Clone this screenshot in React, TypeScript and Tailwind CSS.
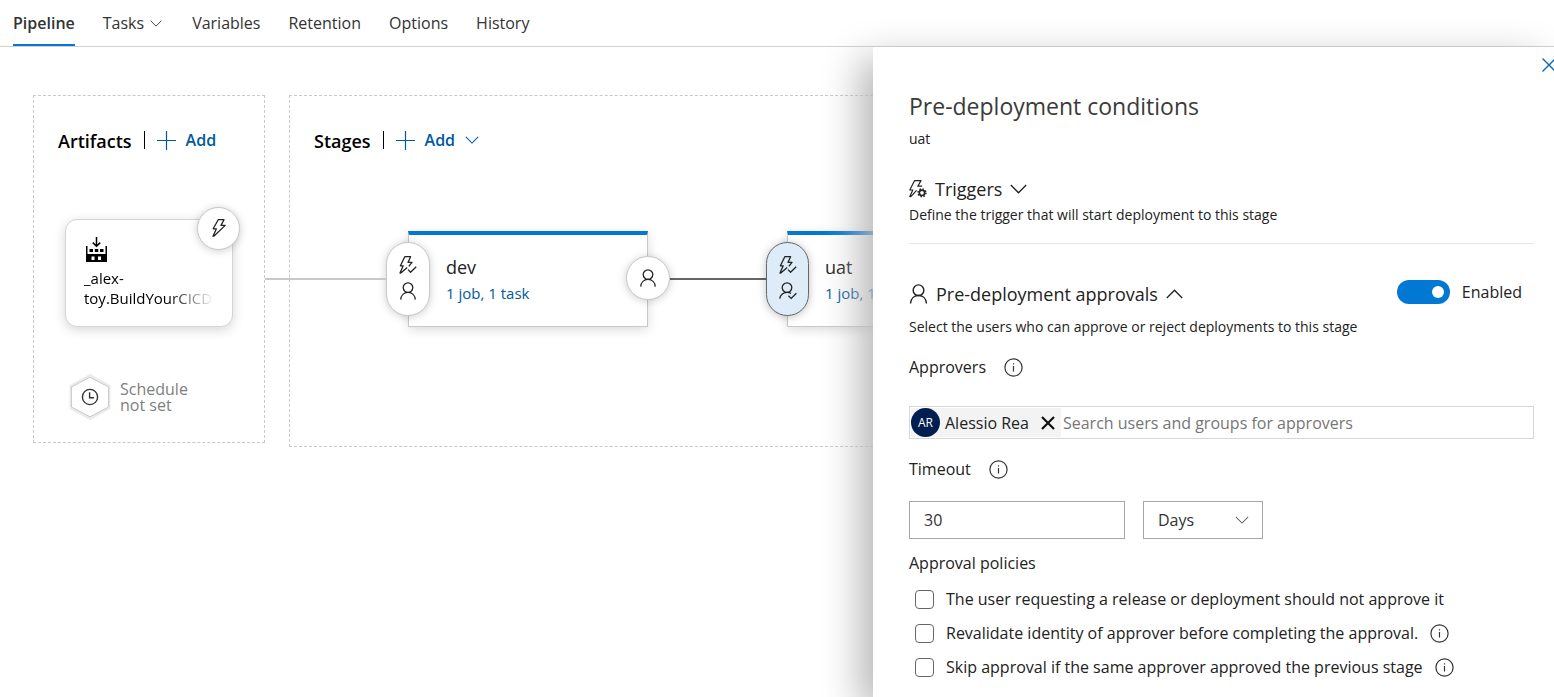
import { useState, type ReactNode } from "react";

function BoltIcon() {
  return (
    <svg width="14" height="18" viewBox="0 0 14 18" fill="none" stroke="#222" strokeWidth="1.3" strokeLinejoin="round">
      <path d="M6.2 .7H12L9 6.4H13.2L1.8 17.2H1L4.4 9.8H1.2Z" />
    </svg>
  );
}

function BoltCheckIcon() {
  return (
    <svg width="18" height="18" viewBox="0 0 18 18" fill="none" stroke="#222" strokeWidth="1.3" strokeLinejoin="round">
      <path d="M9 13.6L11.6 16.2L17.2 10.8" />
      <path d="M8.2 11.4L1.8 17H1L4.2 9.8H1.4L5.8 .7H11.6L9 6.4H13L9.8 10.4" />
    </svg>
  );
}

function BoltGearIcon() {
  return (
    <svg width="18" height="19" viewBox="0 0 18 19" fill="none" stroke="#222" strokeWidth="1.2" strokeLinejoin="round">
      <path d="M7.6 10.4L1.8 16.6H.8L3.8 10H.8L5.6 .6H12L8.8 6.2H13.2" />
      <circle cx="13" cy="12.8" r="2.7" strokeWidth="1.7" />
      <circle cx="13" cy="12.8" r="4" strokeWidth="1.4" strokeDasharray="1.5 1.64" />
    </svg>
  );
}

function UserIcon({ large = false }: { large?: boolean }) {
  return (
    <svg width={large ? 19 : 16} height={large ? 20 : 18} viewBox="0 0 16 18" fill="none" stroke="#222" strokeWidth="1.3">
      <circle cx="8" cy="5.6" r="4.8" />
      <path d="M.8 17.6C1 13.2 4 10.4 8 10.4S15 13.2 15.2 17.6" />
    </svg>
  );
}

function UserCheckIcon() {
  return (
    <svg width="18" height="18" viewBox="0 0 18 18" fill="none" stroke="#222" strokeWidth="1.3">
      <circle cx="8" cy="5.6" r="4.8" />
      <path d="M.8 16.6C1 13 4 10.4 8 10.4C9.6 10.4 11 10.8 12 11.4" />
      <path d="M9.4 13.8L12.2 16.4L17.4 11.2" />
    </svg>
  );
}

function BuildIcon() {
  return (
    <svg width="21" height="25" viewBox="0 0 21 25" fill="#000">
      <path d="M10.5 0V9M6.8 5.6L10.5 9.3L14.2 5.6" fill="none" stroke="#000" strokeWidth="1.5" />
      <path d="M0 9H1.5V17H19.5V9H21V25H0ZM5.5 19.5V23H8.5V19.5ZM12 19.5V23H15V19.5Z" fillRule="evenodd" />
      <path d="M3.5 12H7V15H3.5ZM8.8 12H12.3V15H8.8ZM14 12H17.5V15H14Z" />
    </svg>
  );
}

function Chevron({ width, up = false, className = "" }: { width: number; up?: boolean; className?: string }) {
  return (
    <svg
      width={width}
      height={Math.round(width / 1.7)}
      viewBox="0 0 17 10"
      fill="none"
      stroke="currentColor"
      strokeWidth="1.3"
      className={className}
    >
      <path d={up ? "M.8 9L8.5 1.2L16.2 9" : "M.8 1L8.5 8.8L16.2 1"} />
    </svg>
  );
}

function PlusIcon() {
  return (
    <svg width="19" height="19" viewBox="0 0 19 19" stroke="currentColor" strokeWidth="1.2">
      <path d="M9.5 0V19M0 9.5H19" />
    </svg>
  );
}

function InfoButton({ label }: { label: string }) {
  return (
    <button type="button" aria-label={label} className="shrink-0">
      <svg width="19" height="19" viewBox="0 0 19 19" fill="none" stroke="#333" strokeWidth="1.2">
        <circle cx="9.5" cy="9.5" r="8.6" />
        <path d="M9.5 8V13.6M9.5 5.2V6.6" />
      </svg>
    </button>
  );
}

function Tab({ children, active = false }: { children: ReactNode; active?: boolean }) {
  return (
    <a
      href="#"
      className={
        active
          ? "flex h-full items-center border-b-2 border-[#0078d4] pt-0.5 font-semibold text-[#333]"
          : "flex h-full items-center gap-1.5 border-b-2 border-transparent pt-0.5 text-[#333]"
      }
    >
      {children}
    </a>
  );
}

function GroupHeader({ title, menu = false }: { title: string; menu?: boolean }) {
  return (
    <div className="flex h-6 items-center gap-3 pb-0.5">
      <h2 className="pt-0.5 text-lg font-semibold text-black">{title}</h2>
      <span className="h-[18px] w-px bg-black" />
      <button type="button" className="flex items-center gap-2.5 text-base font-semibold text-[#005a9e]">
        <PlusIcon />
        Add
        {menu && <Chevron width={14} />}
      </button>
    </div>
  );
}

function Stage({ name, selected = false }: { name: string; selected?: boolean }) {
  return (
    <div className="relative h-24 w-60 shrink-0 border border-t-4 border-[#c8c8c8] border-t-[#0078d4] bg-white pt-[18px] pl-[37px] shadow-[0_3px_10px_rgba(0,0,0,0.14)]">
      <h3 className="text-lg leading-7 text-[#222]">{name}</h3>
      <a href="#" className="block text-[15px] leading-6 whitespace-nowrap text-[#005a9e]">
        1 job, 1 task
      </a>
      <button
        type="button"
        aria-label={`Pre-deployment conditions for ${name}`}
        className={
          selected
            ? "absolute top-[7px] -left-[22px] flex h-[74px] w-[43px] flex-col items-center justify-center gap-2 rounded-full border border-[#666] bg-[#deecf9] pb-0.5 shadow-[0_1px_8px_rgba(0,0,0,0.25)]"
            : "absolute top-[7px] -left-[23px] flex h-[74px] w-11 flex-col items-center justify-center gap-2 rounded-full border border-[#c8c8c8] bg-white pb-0.5 shadow-[0_1px_8px_rgba(0,0,0,0.2)]"
        }
      >
        <BoltCheckIcon />
        {selected ? <UserCheckIcon /> : <UserIcon />}
      </button>
      {!selected && (
        <>
          <span className="absolute top-[43px] right-full mr-[22px] h-0.5 w-[122px] bg-[#c8c8c8]" />
          <span className="absolute top-[43px] left-full ml-[23px] h-0.5 w-[96px] bg-[#666]" />
          <button
            type="button"
            aria-label={`Post-deployment conditions for ${name}`}
            className="absolute top-[21px] -right-[23px] flex size-11 items-center justify-center rounded-full border border-[#c8c8c8] bg-white shadow-[0_1px_8px_rgba(0,0,0,0.2)]"
          >
            <UserIcon />
          </button>
        </>
      )}
    </div>
  );
}

function Artifacts() {
  return (
    <section className="h-[348px] w-[232px] shrink-0 border border-dashed border-[#c8c8c8] pt-[33px] pl-6">
      <GroupHeader title="Artifacts" />
      <div className="relative mt-[66px] ml-[7px] h-[108px] w-[168px] rounded-xl border border-[#d4d4d4] bg-white pt-[17px] pl-[18px] shadow-[0_3px_12px_rgba(0,0,0,0.16)]">
        <div className="pl-0.5">
          <BuildIcon />
        </div>
        <p className="mt-1.5 w-[130px] text-[15px] leading-5 text-black [mask-image:linear-gradient(to_right,black_65%,transparent)]">
          _alex-
          <br />
          toy.BuildYourCICD
        </p>
        <button
          type="button"
          aria-label="Continuous deployment trigger"
          className="absolute -top-[13px] -right-2 flex size-[43px] items-center justify-center rounded-full border border-[#c8c8c8] bg-white pb-0.5 shadow-[0_1px_8px_rgba(0,0,0,0.2)]"
        >
          <BoltIcon />
        </button>
      </div>
      <button type="button" className="mt-[47px] ml-[10px] flex items-center gap-2 text-left text-base leading-4 text-[#808080]">
        <svg width="44" height="46" viewBox="0 0 44 46" fill="none">
          <path d="M22 1.5L41 12.2V33.8L22 44.5L3 33.8V12.2Z" stroke="#ebebeb" strokeWidth="3" />
          <path d="M22 3.2L40.6 13V33L22 42.8L3.4 33V13Z" fill="#fff" stroke="#c8c8c8" />
          <circle cx="22" cy="23" r="7.6" stroke="#333" strokeWidth="1.4" />
          <path d="M21.6 18.2V23.8H26" stroke="#333" strokeWidth="1.4" />
        </svg>
        <span>
          Schedule
          <br />
          not set
        </span>
      </button>
    </section>
  );
}

function Policy({ children, info }: { children: string; info?: string }) {
  return (
    <li className="flex h-5 items-center gap-3">
      <label className="flex items-center gap-3 whitespace-nowrap">
        <input type="checkbox" className="size-[19px] appearance-none rounded border border-[#666] bg-white checked:bg-[#0078d4]" />
        {children}
      </label>
      {info && <InfoButton label={info} />}
    </li>
  );
}

function ConditionsPanel() {
  const [enabled, setEnabled] = useState(true);
  return (
    <aside className="relative w-[681px] shrink-0 bg-white pr-5 pb-4 pl-9 text-base leading-5 text-[#222] shadow-[-13px_12px_36px_#b7b7b7]">
      <div className="-mr-5 flex h-9 items-center justify-end overflow-hidden">
        <button type="button" aria-label="Close" className="-mr-0.5">
          <svg width="14" height="14" viewBox="0 0 14 14" stroke="#0068b8" strokeWidth="1.3">
            <path d="M.5 .5L13.5 13.5M13.5 .5L.5 13.5" />
          </svg>
        </button>
      </div>
      <h1 className="mt-[7px] text-[23px] leading-8 text-[#3b3b3b]">Pre-deployment conditions</h1>
      <p className="mt-[7px] text-sm leading-5">uat</p>

      <button type="button" className="mt-7 flex h-6 items-center gap-2 text-lg leading-6">
        <BoltGearIcon />
        Triggers
        <Chevron width={17} />
      </button>
      <p className="mt-1 text-sm leading-5">Define the trigger that will start deployment to this stage</p>
      <hr className="mt-[18px] border-[#e6e6e6]" />

      <div className="mt-9 flex h-6 items-center justify-between">
        <button type="button" className="mt-1 flex h-6 items-center gap-2 text-lg leading-6">
          <UserIcon large />
          Pre-deployment approvals
          <Chevron width={17} up />
        </button>
        <label className="mr-3 flex items-center gap-3">
          <input
            type="checkbox"
            role="switch"
            checked={enabled}
            onChange={(e) => setEnabled(e.target.checked)}
            className="flex h-6 w-[53px] appearance-none items-center rounded-full bg-[#767676] px-1.5 before:size-3 before:rounded-full before:bg-white checked:justify-end checked:bg-[#0078d4]"
          />
          {enabled ? "Enabled" : "Disabled"}
        </label>
      </div>
      <p className="mt-[13px] text-sm leading-5">Select the users who can approve or reject deployments to this stage</p>

      <div className="mt-5 flex h-5 items-center gap-[18px]">
        <label htmlFor="approvers">Approvers</label>
        <InfoButton label="About approvers" />
      </div>
      <div className="mt-[29px] flex h-[33px] items-center border border-[#d6d6d6] p-px">
        <div className="flex h-full items-center bg-[#f3f3f3] pr-1.5">
          <span className="flex size-[29px] items-center justify-center rounded-full bg-[#001e50] text-xs text-white">AR</span>
          <span className="ml-[5px] whitespace-nowrap">Alessio Rea</span>
          <button type="button" aria-label="Remove Alessio Rea" className="ml-3">
            <svg width="14" height="14" viewBox="0 0 14 14" stroke="#111" strokeWidth="2.2">
              <path d="M1 1L13 13M13 1L1 13" />
            </svg>
          </button>
        </div>
        <input
          id="approvers"
          type="text"
          placeholder="Search users and groups for approvers"
          className="h-full min-w-0 flex-1 pl-0.5 outline-none placeholder:text-[#767676]"
        />
      </div>

      <div className="mt-5 flex h-5 items-center gap-[18px]">
        <label htmlFor="timeout">Timeout</label>
        <InfoButton label="About timeout" />
      </div>
      <div className="mt-[22px] flex h-[38px] gap-[18px]">
        <input id="timeout" type="text" defaultValue="30" className="w-[216px] border border-[#a6a6a6] px-3.5 text-[#333]" />
        <div className="relative w-[120px]">
          <select aria-label="Timeout unit" className="size-full appearance-none border border-[#a6a6a6] bg-white px-3.5 text-[#333]">
            <option>Days</option>
            <option>Hours</option>
            <option>Minutes</option>
          </select>
          <Chevron width={14} className="pointer-events-none absolute top-[15px] right-3.5 text-[#666]" />
        </div>
      </div>

      <h2 className="mt-3.5">Approval policies</h2>
      <ul className="mt-4 flex flex-col gap-3.5 pl-1.5">
        <Policy>The user requesting a release or deployment should not approve it</Policy>
        <Policy info="About revalidating identity">Revalidate identity of approver before completing the approval.</Policy>
        <Policy info="About skipping approval">Skip approval if the same approver approved the previous stage</Policy>
      </ul>
    </aside>
  );
}

export default function App() {
  return (
    <div className="flex min-h-screen flex-col overflow-hidden bg-white font-['Open_Sans','Noto_Sans',sans-serif]">
      <nav className="flex h-[47px] shrink-0 gap-7 border-b border-[#d0d0d0] pl-[13px] text-base">
        <Tab active>Pipeline</Tab>
        <Tab>
          Tasks <Chevron width={12} className="mr-0.5" />
        </Tab>
        <Tab>Variables</Tab>
        <Tab>Retention</Tab>
        <Tab>Options</Tab>
        <Tab>History</Tab>
      </nav>
      <div className="flex flex-1">
        <main className="flex min-w-0 flex-1 items-start gap-6 overflow-hidden pt-12 pl-[33px]">
          <Artifacts />
          <section className="h-[352px] w-[1000px] shrink-0 border border-dashed border-[#c8c8c8] pt-[33px] pl-6">
            <GroupHeader title="Stages" menu />
            <div className="mt-[78px] flex gap-[139px] pl-[94px]">
              <Stage name="dev" />
              <Stage name="uat" selected />
            </div>
          </section>
        </main>
        <ConditionsPanel />
      </div>
    </div>
  );
}
